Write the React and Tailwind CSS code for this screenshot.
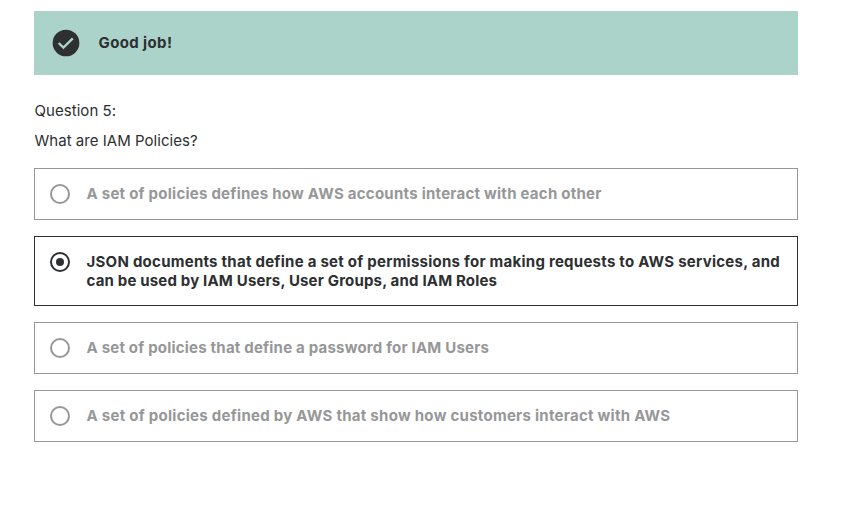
const options = [
  {
    lines: [
      { text: "A set of policies defines how AWS accounts interact with each other", tracking: "tracking-[0.25px]" },
    ],
  },
  {
    selected: true,
    lines: [
      {
        text: "JSON documents that define a set of permissions for making requests to AWS services, and",
        tracking: "tracking-[0.255px]",
      },
      { text: "can be used by IAM Users, User Groups, and IAM Roles", tracking: "tracking-[0.175px]" },
    ],
  },
  {
    lines: [{ text: "A set of policies that define a password for IAM Users", tracking: "tracking-[0.205px]" }],
  },
  {
    lines: [
      {
        text: "A set of policies defined by AWS that show how customers interact with AWS",
        tracking: "tracking-[0.27px]",
      },
    ],
  },
];

function Option({ lines, selected }) {
  return (
    <label
      className={`flex border pt-[15px] pl-[15px] ${
        selected ? "h-[70px] border-[#2d2f31] text-[#2d2f31]" : "h-[52px] border-[#969798] text-[#969798]"
      }`}
    >
      <svg className="h-5 w-5 shrink-0" viewBox="0 0 20 20" fill="none">
        <circle cx="10" cy="10" r="9" stroke="currentColor" strokeWidth="2" />
        {selected && <circle cx="10" cy="10" r="4" fill="currentColor" />}
      </svg>
      <span className="ml-[16.5px] text-[15px] leading-[19px] font-bold whitespace-nowrap">
        {lines.map(({ text, tracking }) => (
          <span key={text} className={`block ${tracking}`}>
            {text}
          </span>
        ))}
      </span>
    </label>
  );
}

export default function App() {
  return (
    <main className="h-[527px] bg-white pt-[11px] pl-[34px] font-['Inter',sans-serif] text-[#2d2f31]">
      <div className="w-[764px]">
        <div className="flex h-16 items-center bg-[#abd3ca] pl-[18px]">
          <svg className="h-7 w-7" viewBox="0 0 28 28" fill="none">
            <circle cx="14" cy="14" r="13.35" fill="#2d2f31" />
            <path d="M6.7 14L11.4 18.6L20.8 9.3" stroke="#abd3ca" strokeWidth="2.4" />
          </svg>
          <strong className="ml-[18.5px] text-[15px] leading-5 tracking-[0.38px]">Good job!</strong>
        </div>
        <p className="mt-[26px] pl-[0.5px] text-[15px] leading-5 tracking-[0.05px]">Question 5:</p>
        <p className="mt-[10px] pl-[0.5px] text-[15px] leading-5 tracking-[0.03px]">What are IAM Policies?</p>
        <div className="mt-[17px] flex flex-col gap-4">
          {options.map((option) => (
            <Option key={option.lines[0].text} {...option} />
          ))}
        </div>
      </div>
    </main>
  );
}
